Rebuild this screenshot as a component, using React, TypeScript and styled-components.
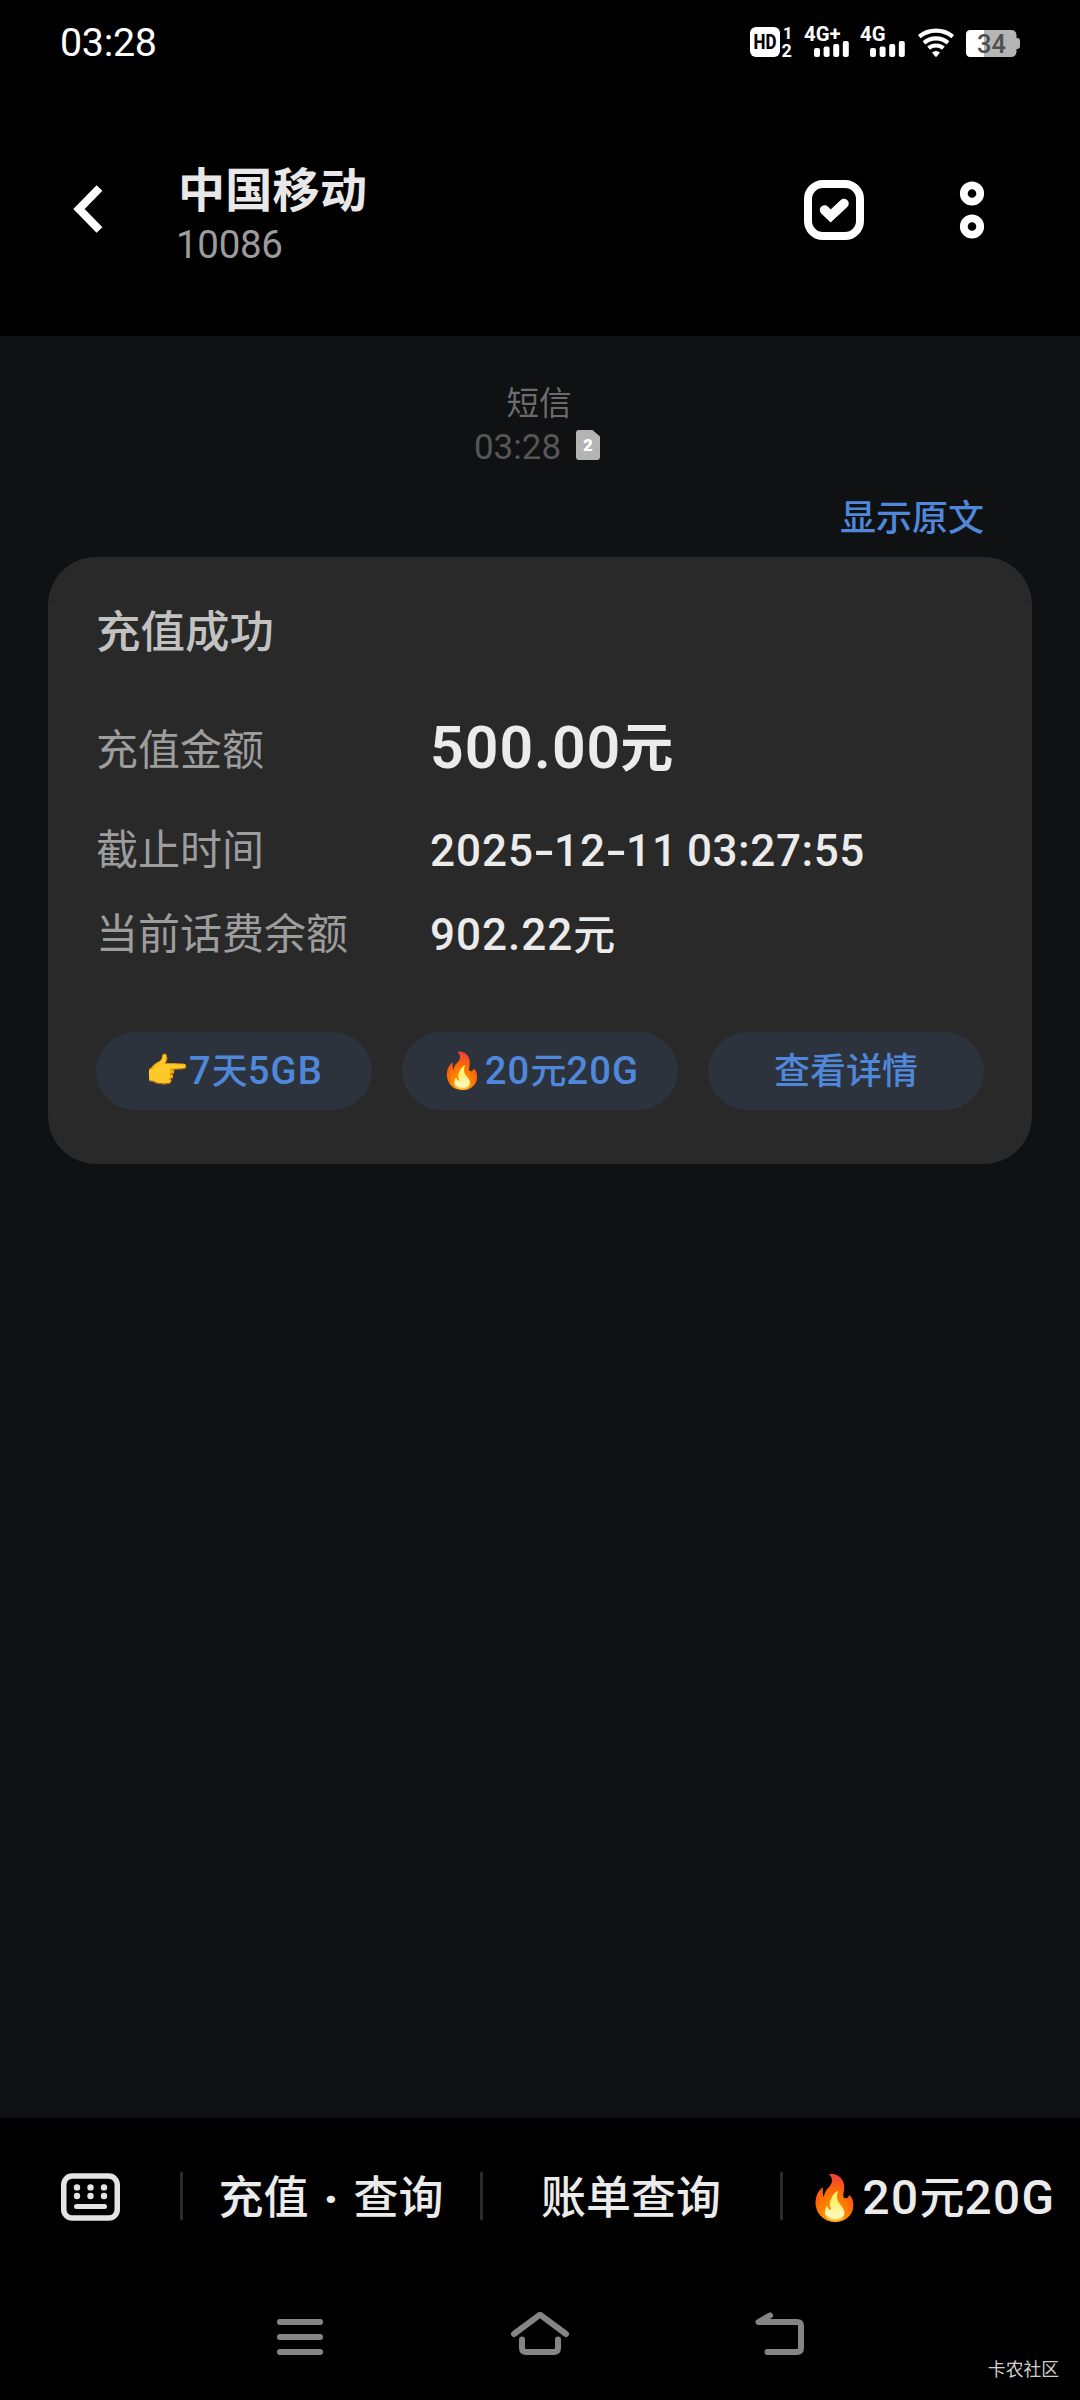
import React from 'react';
import styled, { createGlobalStyle } from 'styled-components';

const Global = createGlobalStyle`
  * { box-sizing: border-box; }
  body { margin: 0; background: #000; }
  svg { display: block; flex: none; overflow: visible; }
`;

const fonts = "Roboto, 'Noto Sans CJK SC', 'Noto Color Emoji', sans-serif";

const Screen = styled.div`
  position: relative;
  width: 1080px;
  height: 2400px;
  display: flex;
  flex-direction: column;
  background: #000;
  font-family: ${fonts};
  color: #e8e8e8;
  overflow: hidden;
`;

const StatusBar = styled.div`
  height: 84px;
  padding: 0 60px;
  display: flex;
  align-items: center;
  justify-content: space-between;
`;

const Clock = styled.span`
  padding-top: 1px;
  font-size: 39.4px;
  line-height: 46px;
  letter-spacing: -0.3px;
  color: #fff;
`;

const StatusIcons = styled.div`
  display: flex;
  align-items: center;
  gap: 12.5px;
`;

const Header = styled.header`
  height: 252px;
  padding: 0 96px 0 73px;
  display: flex;
  align-items: center;
`;

const Contact = styled.div`
  flex: 1;
  margin-left: 75px;
  padding-top: 11px;
  display: flex;
  flex-direction: column;
`;

const Name = styled.h1`
  margin: 0;
  font-size: 47px;
  line-height: 58px;
  letter-spacing: 0.3px;
  font-weight: 700;
`;

const PhoneNo = styled.span`
  margin-left: -2px;
  font-size: 38.5px;
  line-height: 49px;
  letter-spacing: -0.3px;
  color: #9c9c9c;
`;

const HeaderActions = styled.div`
  display: flex;
  align-items: center;
  gap: 96px;
`;

const Thread = styled.main`
  height: 1782px;
  padding: 47px 48px 0;
  background: #0f1112;
  display: flex;
  flex-direction: column;
`;

const Stamp = styled.div`
  display: flex;
  flex-direction: column;
  align-items: center;
  color: #6b6b6b;
`;

const StampKind = styled.span`
  padding-right: 2px;
  font-size: 32.5px;
  line-height: 43px;
`;

const StampTime = styled.div`
  display: flex;
  align-items: center;
  gap: 15px;
  padding-right: 6px;
  font-size: 35px;
  line-height: 44px;
  color: #555657;
  svg { margin-bottom: 6px; }
`;

const ShowOriginal = styled.div`
  align-self: flex-end;
  margin: 25px 48px 0 0;
  font-size: 36px;
  line-height: 48px;
  font-weight: 500;
  color: #4f88da;
`;

const Card = styled.section`
  margin-top: 14px;
  height: 607px;
  padding: 48px 48px 54px;
  border-radius: 48px;
  background: #292929;
  display: flex;
  flex-direction: column;
`;

const CardTitle = styled.h2`
  margin: 0 0 48px;
  font-size: 44.5px;
  line-height: 56px;
  font-weight: 500;
  color: #c2c2c2;
`;

const Row = styled.div<{ $after?: number }>`
  height: 84px;
  margin-bottom: ${(p) => p.$after ?? 0}px;
  line-height: 60px;
  display: flex;
  align-items: center;
`;

const Label = styled.span`
  width: 334px;
  font-size: 42px;
  color: #9d9d9d;
`;

const Value = styled.span<{ $large?: boolean }>`
  font-size: ${(p) => (p.$large ? 59 : 44)}px;
  padding-bottom: ${(p) => (p.$large ? 6 : 0)}px;
  font-weight: ${(p) => (p.$large ? 600 : 500)};
  letter-spacing: 1px;
  word-spacing: -3px;
  color: #ebebeb;
  white-space: nowrap;
`;

const Unit = styled.span<{ $large?: boolean }>`
  margin-left: ${(p) => (p.$large ? -1 : 0)}px;
  font-size: ${(p) => (p.$large ? 53 : 42)}px;
  font-weight: ${(p) => (p.$large ? 600 : 500)};
  vertical-align: ${(p) => (p.$large ? 1 : 0)}px;
  line-height: 0;
  letter-spacing: 0;
`;

const Dash = styled.span`
  display: inline-block;
  margin: 0 1px 0 3px;
  transform: scaleX(1.4);
`;

const Clocked = styled.span`
  letter-spacing: 0.6px;
`;

const Actions = styled.div`
  margin-top: auto;
  display: grid;
  grid-template-columns: repeat(3, 276px);
  gap: 30px;
`;

const Pill = styled.button`
  height: 78px;
  padding: 2px 0 0;
  border: 0;
  border-radius: 39px;
  background: #2d333d;
  font: 500 36px/76px ${fonts};
  color: #4f88da;
  white-space: nowrap;
`;

const Latin = styled.span`
  font-size: 1.06em;
  line-height: 0;
  letter-spacing: 0.03em;
`;

const Emoji = styled.span`
  font-size: 0.98em;
  line-height: 0;
  vertical-align: 1px;
`;

const Menu = styled.nav`
  height: 156px;
  display: flex;
  align-items: center;
`;

const KeyboardTab = styled.div`
  width: 180px;
  padding-left: 61px;
`;

const MenuItem = styled.div<{ $shift?: number }>`
  flex: none;
  width: 300px;
  height: 48px;
  padding-top: 5px;
  padding-right: ${(p) => p.$shift ?? 1}px;
  border-left: 3px solid #2a2a2a;
  text-align: center;
  font-size: 45px;
  line-height: 44px;
  font-weight: 500;
  white-space: nowrap;
  word-spacing: 4px;
  color: #ebebeb;
`;

const Dot = styled.span`
  font-weight: 900;
`;

const SystemNav = styled.footer`
  height: 126px;
  padding: 0 180px;
  display: grid;
  grid-template-columns: repeat(3, 240px);
  align-items: center;
  justify-items: center;
`;

const Watermark = styled.span`
  position: absolute;
  right: 21px;
  bottom: 19px;
  font-size: 17.8px;
  line-height: 22px;
  color: #cfcfcf;
`;

const HdIcon = () => (
  <svg width="42" height="30" viewBox="0 0 42 30" fill="#fff" fontWeight="700">
    <rect width="30" height="30" rx="6" />
    <text x="3.5" y="22" fontSize="19.5" fontWeight="800" fill="#000" textLength="23" lengthAdjust="spacingAndGlyphs">HD</text>
    <text x="33" y="12" fontSize="16.5">1</text>
    <text x="31.5" y="30" fontSize="18">2</text>
  </svg>
);

const SignalIcon = ({ label }: { label: string }) => (
  <svg width="44" height="30" viewBox="0 0 44 30" fill="#fff">
    <text x="-1" y="14.4" fontSize="20.3" fontWeight="700">{label}</text>
    <rect x="9" y="21" width="6" height="9" rx="2" />
    <rect x="18.6" y="19.5" width="6" height="10.5" rx="2" />
    <rect x="28.2" y="17" width="6" height="13" rx="2" />
    <rect x="37.8" y="14" width="6" height="16" rx="2" />
  </svg>
);

const WifiIcon = () => (
  <svg width="36" height="30" viewBox="0 0 36 30" fill="none" stroke="#fff" strokeWidth="4.2">
    <path d="M1.2 9.6A26.5 26.5 0 0 1 34.8 9.6" />
    <path d="M6 15.8A18.5 18.5 0 0 1 30 15.8" />
    <path d="M10.6 21.2A11.5 11.5 0 0 1 25.4 21.2" />
    <path d="M14 25.4Q18 22.4 22 25.4L18.8 29.4Q18 30.2 17.2 29.4Z" fill="#fff" stroke="none" />
  </svg>
);

const BatteryIcon = () => (
  <svg width="54" height="30" viewBox="0 0 54 30">
    <path d="M5 3H45Q50 3 50.5 8V11H51Q54 11 54 14V19Q54 22 51 22H50.5V25Q50 30 45 30H5Q0 30 0 25V8Q0 3 5 3Z" fill="#b5b5b5" />
    <path d="M5 3H18V30H5Q0 30 0 25V8Q0 3 5 3Z" fill="#fff" />
    <text x="25.5" y="25.6" fontSize="25.5" fontWeight="500" textAnchor="middle" fill="#505050">34</text>
  </svg>
);

const BackIcon = () => (
  <svg width="30" height="48" viewBox="0 1 30 48" fill="none" stroke="#fff" strokeWidth="8.2">
    <path d="M26.5 3L6 24L26.5 45" />
  </svg>
);

const SelectIcon = () => (
  <svg width="60" height="60" viewBox="0 0 60 60" fill="none" stroke="#fff">
    <rect x="4" y="4" width="52" height="52" rx="15" strokeWidth="8" />
    <path d="M20.5 30L26.7 36L40 23.5" strokeWidth="9.5" strokeLinecap="round" />
  </svg>
);

const MoreIcon = () => (
  <svg width="24" height="58" viewBox="0 0 24 58" fill="none" stroke="#fff" strokeWidth="7.8">
    <circle cx="12" cy="12.5" r="8.2" />
    <circle cx="12" cy="45.5" r="8.2" />
  </svg>
);

const SimIcon = () => (
  <svg width="24" height="30" viewBox="0 0 24 30">
    <path d="M3 0H16.5L24 6.5V27Q24 30 21 30H3Q0 30 0 27V3Q0 0 3 0Z" fill="#b4b4b4" />
    <text x="12" y="20.8" fontSize="17" fontWeight="900" textAnchor="middle" fill="#fff">2</text>
  </svg>
);

const KeyboardIcon = () => (
  <svg width="59" height="50" viewBox="0 0 59 50" fill="#e4e4e4">
    <rect x="2.75" y="5.1" width="53.5" height="42" rx="8.5" fill="none" stroke="#e4e4e4" strokeWidth="5.5" />
    {[16, 29.5, 43].map((x) => (
      <g key={x}>
        <circle cx={x} cy="16.4" r="3.2" />
        <circle cx={x} cy="25" r="3.2" />
      </g>
    ))}
    <path d="M15.5 35.4H43.5" stroke="#e4e4e4" strokeWidth="5" strokeLinecap="round" />
  </svg>
);

const NavIcon = ({ d }: { d: string }) => (
  <svg width="60" height="48" viewBox="0 0 60 48" fill="none" stroke="#858585" strokeWidth="6" strokeLinecap="round" strokeLinejoin="round">
    <path d={d} />
  </svg>
);

export default function App() {
  return (
    <Screen>
      <Global />
      <StatusBar>
        <Clock>03:28</Clock>
        <StatusIcons>
          <HdIcon />
          <SignalIcon label="4G+" />
          <SignalIcon label="4G" />
          <WifiIcon />
          <BatteryIcon />
        </StatusIcons>
      </StatusBar>
      <Header>
        <BackIcon />
        <Contact>
          <Name>中国移动</Name>
          <PhoneNo>10086</PhoneNo>
        </Contact>
        <HeaderActions>
          <SelectIcon />
          <MoreIcon />
        </HeaderActions>
      </Header>
      <Thread>
        <Stamp>
          <StampKind>短信</StampKind>
          <StampTime>03:28<SimIcon /></StampTime>
        </Stamp>
        <ShowOriginal>显示原文</ShowOriginal>
        <Card>
          <CardTitle>充值成功</CardTitle>
          <Row $after={16}>
            <Label>充值金额</Label>
            <Value $large>500.00<Unit $large>元</Unit></Value>
          </Row>
          <Row>
            <Label>截止时间</Label>
            <Value>2025<Dash>-</Dash>12<Dash>-</Dash>11 <Clocked>03:27:55</Clocked></Value>
          </Row>
          <Row>
            <Label>当前话费余额</Label>
            <Value>902.22<Unit>元</Unit></Value>
          </Row>
          <Actions>
            <Pill><Emoji>👉</Emoji><Latin>7</Latin>天<Latin>5GB</Latin></Pill>
            <Pill><Emoji>🔥</Emoji><Latin>20</Latin>元<Latin>20G</Latin></Pill>
            <Pill>查看详情</Pill>
          </Actions>
        </Card>
      </Thread>
      <Menu>
        <KeyboardTab><KeyboardIcon /></KeyboardTab>
        <MenuItem>充值 <Dot>·</Dot> 查询</MenuItem>
        <MenuItem $shift={1}>账单查询</MenuItem>
        <MenuItem $shift={0}><Emoji>🔥</Emoji><Latin>20</Latin>元<Latin>20G</Latin></MenuItem>
      </Menu>
      <SystemNav>
        <NavIcon d="M10 9H50M10 24H50M10 39H50" />
        <NavIcon d="M4 21L30 1.7L56 21M12 26.5V35Q12 39 16 39H44Q48 39 48 35V26.5" />
        <NavIcon d="M20 2.5L8.5 9H47Q51 9 51 13V35Q51 39 47 39H17.5" />
      </SystemNav>
      <Watermark>卡农社区</Watermark>
    </Screen>
  );
}
